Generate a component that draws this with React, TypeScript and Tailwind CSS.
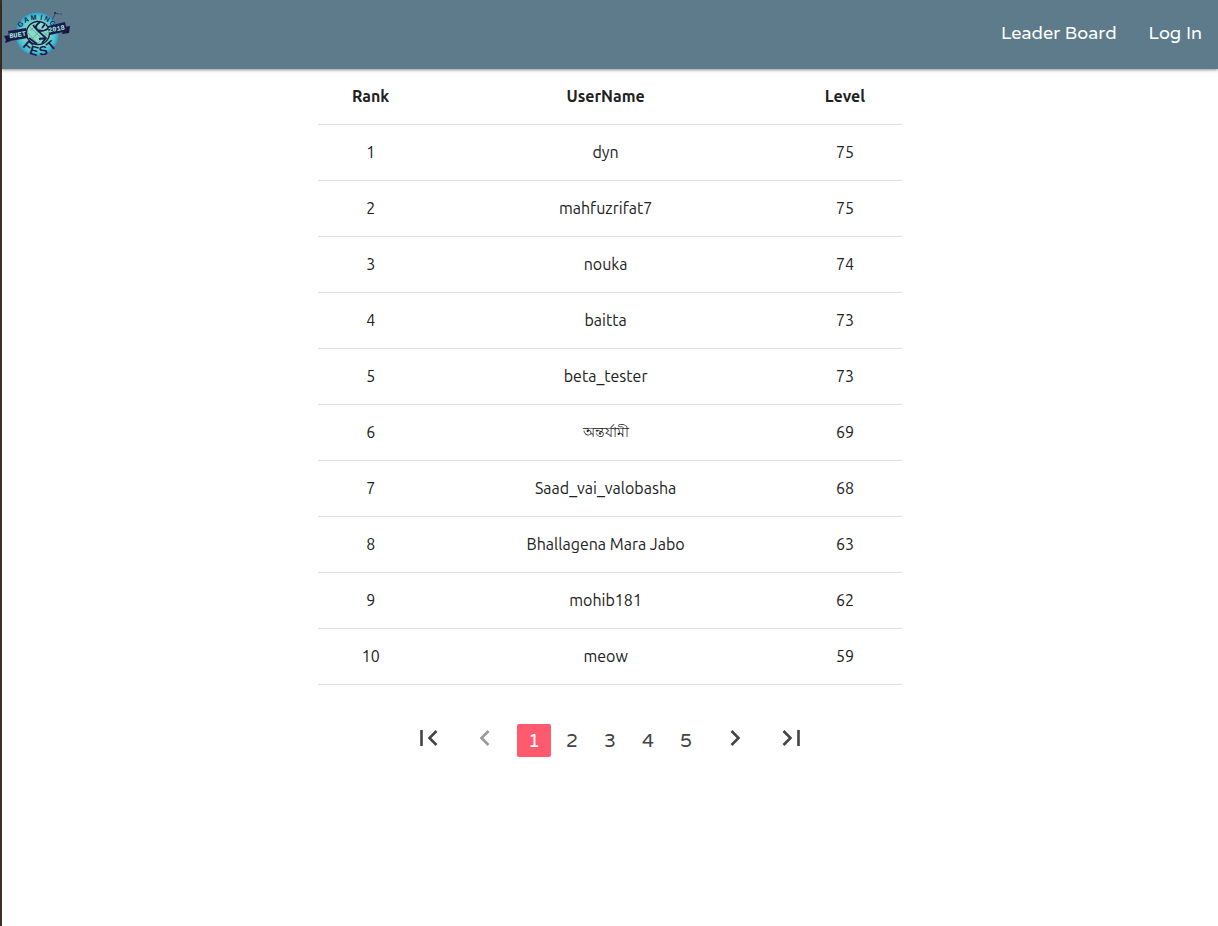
import { useState } from "react";

type Entry = { name: string; level: number };

const entries: Entry[] = [
  { name: "dyn", level: 75 },
  { name: "mahfuzrifat7", level: 75 },
  { name: "nouka", level: 74 },
  { name: "baitta", level: 73 },
  { name: "beta_tester", level: 73 },
  { name: "অন্তর্যামী", level: 69 },
  { name: "Saad_vai_valobasha", level: 68 },
  { name: "Bhallagena Mara Jabo", level: 63 },
  { name: "mohib181", level: 62 },
  { name: "meow", level: 59 },
];

const pages = [1, 2, 3, 4, 5];

// Bengali glyphs run larger than Latin ones at the same size.
const isBengali = (text: string) => /[\u0980-\u09ff]/.test(text);

function Logo() {
  const arc = [
    { c: "G", x: 22, y: 26, r: -38 },
    { c: "A", x: 27, y: 22, r: -22 },
    { c: "M", x: 34, y: 20, r: -6 },
    { c: "I", x: 41, y: 20, r: 10 },
    { c: "N", x: 46, y: 21, r: 26 },
    { c: "G", x: 51, y: 25, r: 42 },
  ];
  const fest = [
    { c: "F", x: 25, y: 49, r: 40 },
    { c: "E", x: 33, y: 55, r: 16 },
    { c: "S", x: 44, y: 55, r: -10 },
    { c: "T", x: 54, y: 49, r: -40 },
  ];
  return (
    <svg className="block h-16 w-[72px]" viewBox="0 0 72 64" role="img" aria-label="BUET Fest 2018">
      <defs>
        <radialGradient id="disc">
          <stop offset="0.5" stopColor="#7bdcc0" />
          <stop offset="0.82" stopColor="#4fc6cc" />
          <stop offset="1" stopColor="#2d9fd0" />
        </radialGradient>
      </defs>
      <circle cx="37" cy="34" r="21.5" fill="url(#disc)" />
      <circle cx="38" cy="33" r="11.5" fill="#8bdcc4" stroke="#1c1a4e" strokeWidth="1.4" />
      <path d="M30 27l14 14M28 33l9 10M34 24l14 12M46 24L31 40M49 31L37 44M30 31l8-8" stroke="#5cb3ab" strokeWidth="1" />
      <path d="M40 22c-4 3-6 6-2 8 5 2 8 0 11-2M33 25l4 5 9 8-4 5M46 38l-7 1M29 38l8 6M45 24l-3 4" fill="none" stroke="#1c1a4e" strokeWidth="1.8" />
      <path d="M52 20l3-6M55 13l4 1M60 14h2" stroke="#303657" strokeWidth="0.8" />
      <circle cx="55" cy="13" r="0.9" fill="#1c1a4e" />
      <path d="M4 36l6-1 1 6-6 2 1-3zM64 27l6-1-1 7-7 1z" fill="#17153f" />
      <path d="M8 31l18-3 2 10-18 3zM48 26l17-4 2 9-17 4z" fill="#1c1a4e" />
      <g fill="#a6efdb" fontFamily="Liberation Mono, monospace" fontWeight="700" fontSize="7" textAnchor="middle">
        <text transform="translate(18 37) rotate(-9)">BUET</text>
        <text transform="translate(57 31) rotate(-11)">2018</text>
      </g>
      <g fill="#1c1a4e" fontFamily="Liberation Sans, sans-serif" fontWeight="700" textAnchor="middle">
        {arc.map((l, i) => (
          <text key={i} fontSize="7" transform={`translate(${l.x} ${l.y}) rotate(${l.r})`}>{l.c}</text>
        ))}
        {fest.map((l) => (
          <text key={l.c} fontSize="13" transform={`translate(${l.x} ${l.y}) rotate(${l.r})`}>{l.c}</text>
        ))}
      </g>
    </svg>
  );
}

function StepButton({ label, d, onClick, disabled = false }: { label: string; d: string; onClick: () => void; disabled?: boolean }) {
  return (
    <button
      type="button"
      aria-label={label}
      onClick={onClick}
      className={`flex h-7 w-8 items-center justify-center ${disabled ? "text-[#999999]" : "text-[#444444]"}`}
    >
      <svg className="h-6 w-6" viewBox="0 0 24 24" fill="none" stroke="currentColor" strokeWidth="2.6">
        <path d={d} />
      </svg>
    </button>
  );
}

export default function App() {
  const [page, setPage] = useState(1);
  const last = pages.length;

  return (
    <div className="flex min-h-screen flex-col border-l-2 border-[#3e2e27] bg-white font-['Ubuntu','Noto_Sans','Open_Sans',sans-serif] text-[#212121]">
      <header className="flex h-[68px] items-center justify-between bg-[#5d7b8a] shadow-[0_1px_0_#5d7b8a,0_2px_3px_rgba(0,0,0,0.45)]">
        <a href="#home" className="-ml-0.5 pb-1">
          <Logo />
        </a>
        <nav className="flex gap-8 pr-4 pb-0.5 font-['Varela','Prompt','Nunito','Open_Sans',sans-serif] text-lg text-white">
          <a href="#leaderboard">Leader Board</a>
          <a href="#login">Log In</a>
        </nav>
      </header>

      <main className="mx-auto w-[48%]">
        <table className="w-full table-fixed border-collapse text-center text-base">
          <colgroup>
            <col className="w-[18%]" />
            <col />
            <col className="w-[19.5%]" />
          </colgroup>
          <thead>
            <tr className="h-14 border-b border-[#dddddd]">
              <th scope="col" className="font-bold">Rank</th>
              <th scope="col" className="font-bold">UserName</th>
              <th scope="col" className="font-bold">Level</th>
            </tr>
          </thead>
          <tbody>
            {entries.map((entry, i) => (
              <tr key={entry.name} className="h-14 border-b border-[#dddddd]">
                <td>{i + 1}</td>
                <td className={isBengali(entry.name) ? "text-sm" : ""}>{entry.name}</td>
                <td>{entry.level}</td>
              </tr>
            ))}
          </tbody>
        </table>

        <nav aria-label="Pages" className="mt-[39px] flex items-start justify-center gap-4 font-['Varela','Prompt','DejaVu_Sans',sans-serif]">
          <div className="flex gap-6">
            <StepButton label="First page" d="M4.5 4v16M19.5 5l-7 7 7 7" onClick={() => setPage(1)} />
            <StepButton label="Previous page" d="M15.5 5l-7 7 7 7" disabled={page === 1} onClick={() => setPage(Math.max(1, page - 1))} />
          </div>
          <div className="flex gap-1 text-[19px]">
            {pages.map((n) => (
              <button
                key={n}
                type="button"
                onClick={() => setPage(n)}
                aria-current={n === page ? "page" : undefined}
                className={`h-[33px] w-[34px] rounded-xs ${n === page ? "bg-[#ff5a6e] text-white" : "text-[#444444]"}`}
              >
                {n}
              </button>
            ))}
          </div>
          <div className="flex gap-6">
            <StepButton label="Next page" d="M8.5 5l7 7-7 7" onClick={() => setPage(Math.min(last, page + 1))} />
            <StepButton label="Last page" d="M19.5 4v16M4.5 5l7 7-7 7" onClick={() => setPage(last)} />
          </div>
        </nav>
      </main>
    </div>
  );
}
